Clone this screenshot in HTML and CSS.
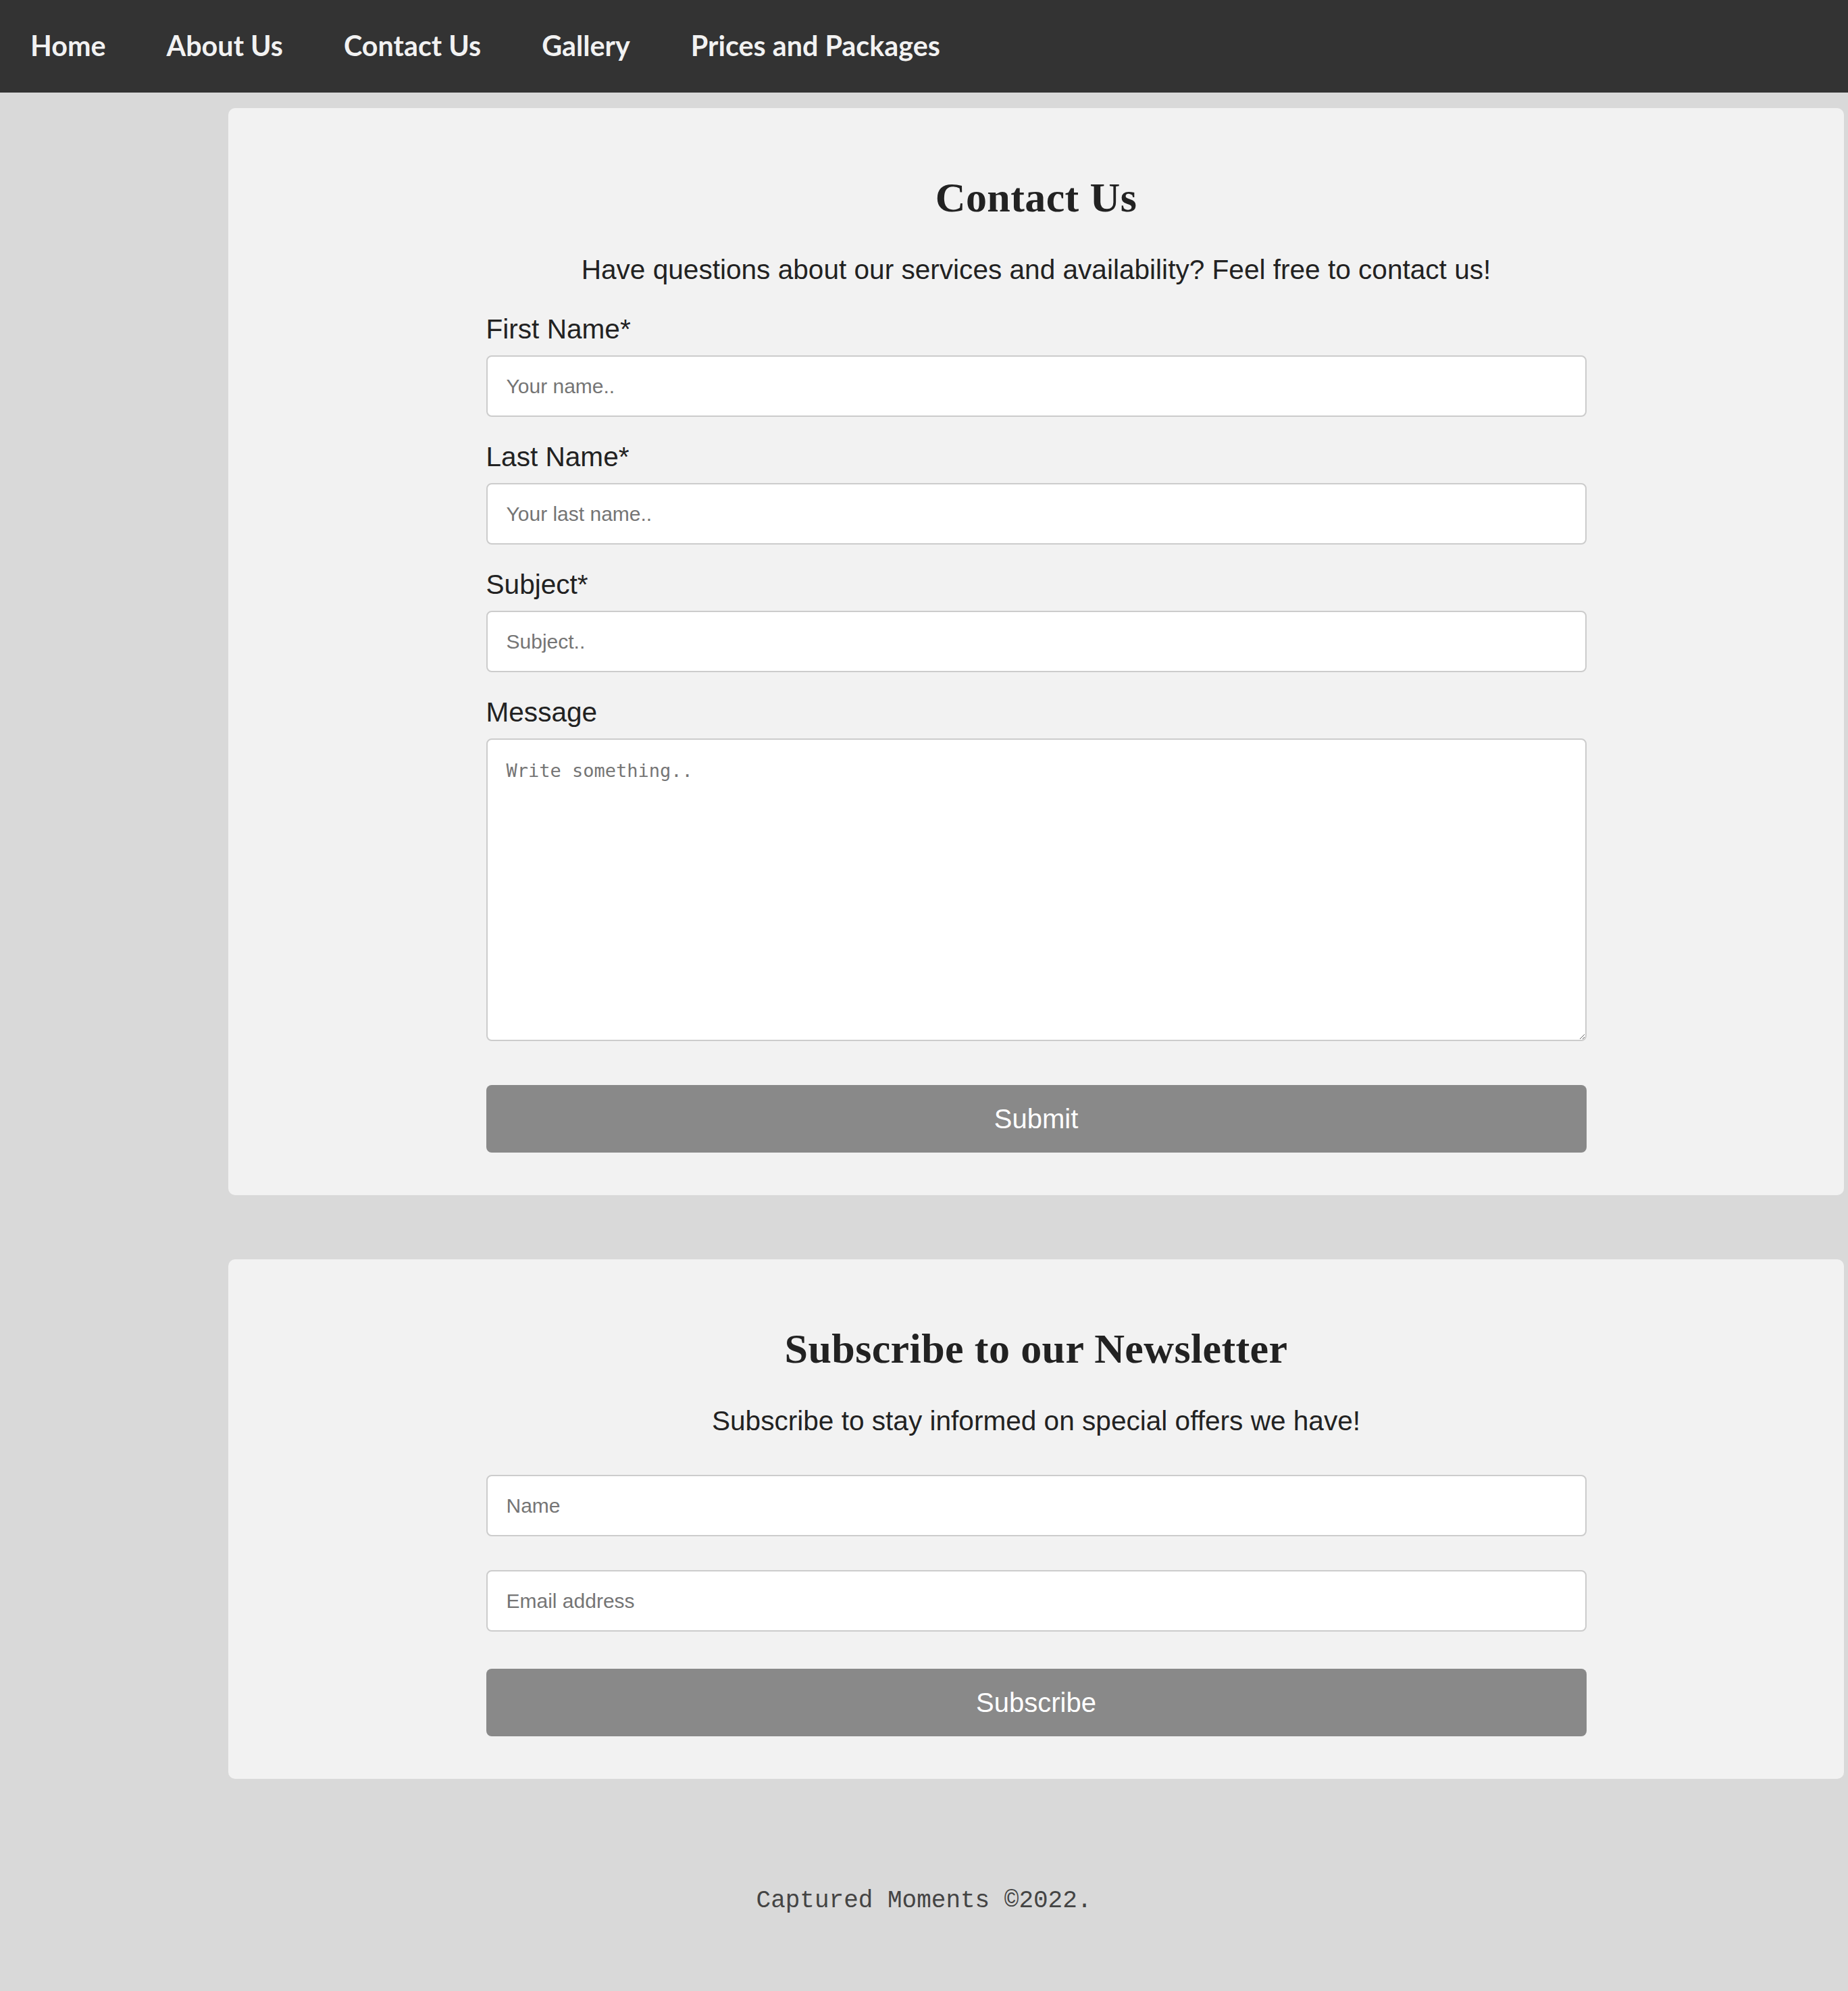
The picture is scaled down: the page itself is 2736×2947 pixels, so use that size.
FILE: index.html
```html
<!DOCTYPE html>
<html lang="en">
<head>
<meta charset="utf-8">
<title>Contact Us - Captured Moments</title>
<link rel="stylesheet" href="styles.css">
</head>
<body>
<nav class="topnav">
  <a href="#">Home</a>
  <a href="#">About Us</a>
  <a href="#">Contact Us</a>
  <a href="#">Gallery</a>
  <a href="#">Prices and Packages</a>
</nav>
<main class="page">
  <div class="content">
    <section class="card">
      <h2 class="card-title">Contact Us</h2>
      <p class="card-lead">Have questions about our services and availability? Feel free to contact us!</p>
      <form class="form">
        <label class="field-label" for="fname">First Name*</label>
        <input class="field" type="text" id="fname" placeholder="Your name..">
        <label class="field-label" for="lname">Last Name*</label>
        <input class="field" type="text" id="lname" placeholder="Your last name..">
        <label class="field-label" for="subject">Subject*</label>
        <input class="field" type="text" id="subject" placeholder="Subject..">
        <label class="field-label" for="message">Message</label>
        <textarea class="field field-area" id="message" placeholder="Write something.."></textarea>
        <button class="btn btn-submit" type="button">Submit</button>
      </form>
    </section>
    <section class="card">
      <h2 class="card-title">Subscribe to our Newsletter</h2>
      <p class="card-lead">Subscribe to stay informed on special offers we have!</p>
      <form class="form form-news">
        <input class="field field-news" type="text" placeholder="Name">
        <input class="field field-news" type="text" placeholder="Email address">
        <button class="btn btn-subscribe" type="button">Subscribe</button>
      </form>
    </section>
  </div>
</main>
<footer class="footer">Captured Moments ©2022.</footer>
</body>
</html>
```
FILE: styles.css
```css
* { box-sizing: border-box; }

html, body {
  margin: 0;
  padding: 0;
}

body {
  background: #d9d9d9;
  color: #222;
  font-family: "Liberation Sans", Arial, sans-serif;
  min-height: 2947px;
}

.topnav {
  background: #333;
  height: 137px;
  display: flex;
  align-items: center;
  padding-left: 45px;
  gap: 90px;
}

.topnav a {
  color: #f2f2f2;
  text-decoration: none;
  font-family: "Lato", "Open Sans", sans-serif;
  font-weight: 700;
  font-size: 41.3px;
  line-height: 1;
  position: relative;
  top: -1px;
}

.page {
  display: grid;
  grid-template-columns: 338px 1fr;
  padding: 23px 6px 0 0;
}

.content {
  grid-column: 2;
  display: flex;
  flex-direction: column;
  gap: 95px;
}

.card {
  background: #f2f2f2;
  border-radius: 10px;
  padding: 96px 0 63px;
}

.card-title {
  margin: 0;
  text-align: center;
  font-family: "Liberation Serif", "Times New Roman", serif;
  font-weight: 700;
  font-size: 62px;
  line-height: 72px;
  letter-spacing: 0.4px;
  color: #222;
}

.card-lead {
  margin: 48px 0 0;
  text-align: center;
  font-size: 40.6px;
  line-height: 46px;
  color: #222;
}

.form {
  width: 1629px;
  margin: 42px auto 0;
  display: flex;
  flex-direction: column;
}

.form-news {
  margin-top: 57px;
}

.field-label {
  display: block;
  font-size: 40.6px;
  line-height: 46px;
  margin-bottom: 16px;
  color: #222;
}

.field {
  display: block;
  width: 100%;
  height: 91px;
  margin: 0 0 36px;
  padding: 0 28px;
  border: 2px solid #ccc;
  border-radius: 8px;
  background: #fff;
  font-family: "Liberation Sans", Arial, sans-serif;
  font-size: 30px;
  color: #222;
  outline: none;
}

.field::placeholder {
  color: #757575;
}

.field-area {
  height: 448px;
  margin-bottom: 65px;
  padding: 30px 28px;
  font-family: "DejaVu Sans Mono", monospace;
  font-size: 27px;
  resize: vertical;
}

.field-news {
  margin-bottom: 50px;
}

.field-news + .field-news {
  margin-bottom: 55px;
}

.btn {
  display: block;
  width: 100%;
  height: 100px;
  border: none;
  border-radius: 8px;
  background: #898989;
  color: #fff;
  font-family: "Liberation Sans", Arial, sans-serif;
  font-size: 40px;
  cursor: pointer;
}

.footer {
  margin-top: 160px;
  text-align: center;
  font-family: "Liberation Mono", "Courier New", monospace;
  font-size: 36px;
  line-height: 41px;
  color: #444;
}
```
